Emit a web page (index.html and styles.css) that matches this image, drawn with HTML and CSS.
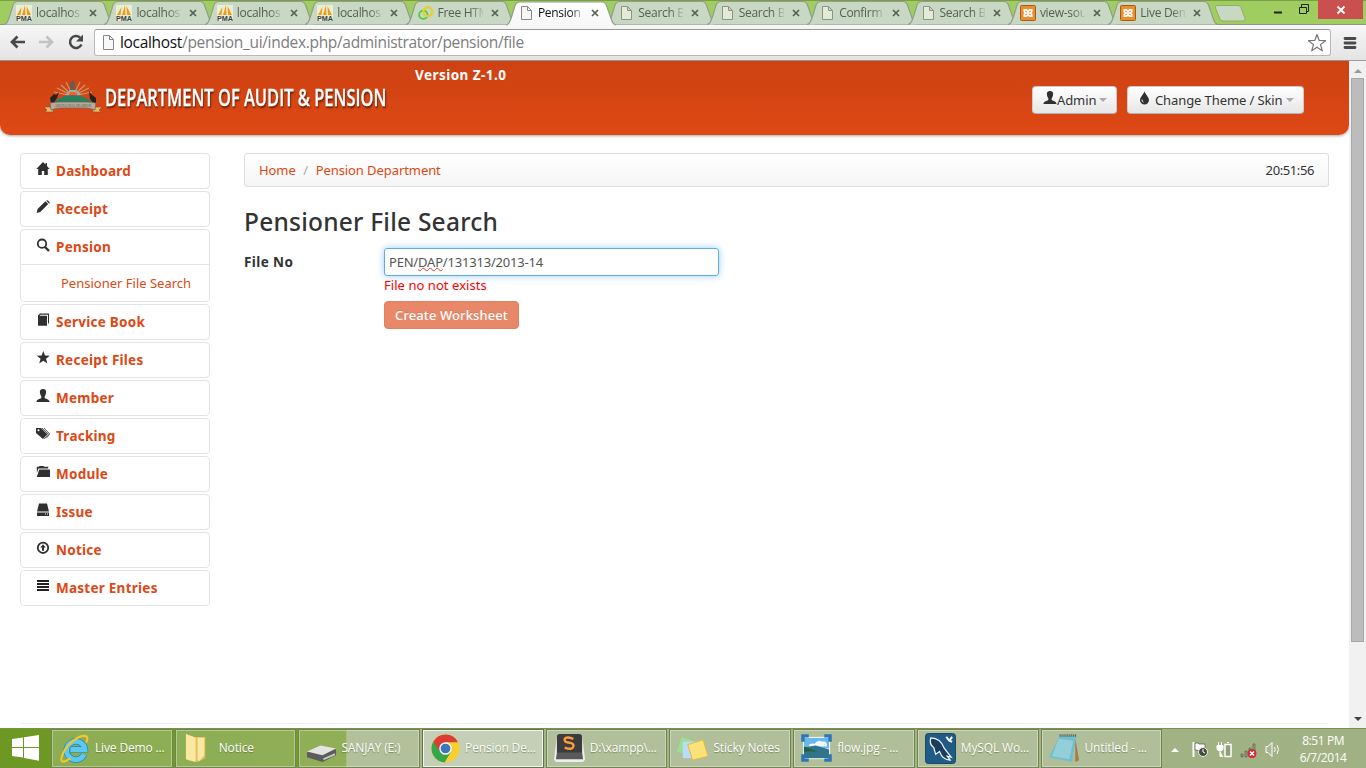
FILE: index.html
```html
<!DOCTYPE html>
<html lang="en">
<head>
<meta charset="utf-8">
<title>Pension Department</title>
<link rel="stylesheet" href="styles.css">
</head>
<body>
<svg class="defs" aria-hidden="true">
  <defs>
    <linearGradient id="gActive" x1="0" y1="0" x2="0" y2="1"><stop offset="0" stop-color="#fff"/><stop offset="1" stop-color="#f7f7f7"/></linearGradient>
    <symbol id="tab" viewBox="0 0 112 25"><path d="M1 24.5C5 24 5 20 7 15L10 5Q11.500 1.500 15 1.500H97Q100 1.500 101.500 5L105 15C107 20 107 24 111 24.500" stroke="#919f88" stroke-width="1.200"/></symbol>
    <symbol id="pma" viewBox="0 0 16 16"><path fill="#e8efd5" d="M0 0h16v16H0z"/><path fill="#f39b18" d="M1 10 5.500 2 4.500 10zM6 10 9 0l.5 10zM11 10 10.500 1l4.500 9z"/><text x="0" y="16" font-size="6.500" font-weight="700" textLength="16" lengthAdjust="spacingAndGlyphs" font-family="Liberation Sans" fill="#394148">PMA</text></symbol>
    <symbol id="page" viewBox="0 0 16 16"><path d="M3.500 1.500h6l4 4v9h-10zM9.500 1.500v4h4" stroke="#8c9388" fill="#e4ebd5"/></symbol>
    <symbol id="pagew" viewBox="0 0 16 16"><path d="M3.500 1.500h6l4 4v9h-10zM9.500 1.500v4h4" stroke="#888" fill="#f6f6f6"/></symbol>
    <symbol id="xampp" viewBox="0 0 16 16"><rect x=".5" y=".5" width="15" height="15" rx="1" fill="#ee8c30" stroke="#a65c12"/><path d="M5 4.800h1.500L8 6.300l1.500-1.500H11M5 11.200h1.500L8 9.700l1.500 1.500H11M5.500 8h5M4.300 4v2.500L5.500 8 4.300 9.500V12M11.700 4v2.500L10.500 8l1.200 1.500V12" fill="none" stroke="#fff" stroke-width="1.700"/></symbol>
    <symbol id="rings" viewBox="0 0 18 16"><circle cx="6" cy="10" r="4.700" fill="none" stroke="#43cf3a" stroke-width="2"/><circle cx="11" cy="6.500" r="5" fill="none" stroke="#e8ce2e" stroke-width="2.600"/></symbol>
    <symbol id="x" viewBox="0 0 8 8"><path d="m1 1 6 6M7 1 1 7" stroke="#566050" stroke-width="1.700"/></symbol>
    <symbol id="user" viewBox="0 0 14 14"><path d="M7 0C4.500 0 3.700 1.500 3.900 3.300 4 5.200 4.700 6.500 5.300 7.200V9C3.500 10.200.6 10.300.5 13h13c-.1-2.700-3-2.800-4.800-4V7.200c.6-.7 1.300-2 1.400-3.900C10.300 1.500 9.500 0 7 0z"/></symbol>
  </defs>
</svg>

<header class="chrome">
  <div class="tabstrip">
    <div class="tab"><svg class="shape"><use href="#tab"/></svg><svg class="fav"><use href="#pma"/></svg><span>localhos</span><svg class="close"><use href="#x"/></svg></div>
    <div class="tab"><svg class="shape"><use href="#tab"/></svg><svg class="fav"><use href="#pma"/></svg><span>localhost</span><svg class="close"><use href="#x"/></svg></div>
    <div class="tab"><svg class="shape"><use href="#tab"/></svg><svg class="fav"><use href="#pma"/></svg><span>localhos</span><svg class="close"><use href="#x"/></svg></div>
    <div class="tab"><svg class="shape"><use href="#tab"/></svg><svg class="fav"><use href="#pma"/></svg><span>localhos</span><svg class="close"><use href="#x"/></svg></div>
    <div class="tab"><svg class="shape"><use href="#tab"/></svg><svg class="fav"><use href="#rings"/></svg><span>Free HTM</span><svg class="close"><use href="#x"/></svg></div>
    <div class="tab active"><svg class="shape"><use href="#tab"/></svg><svg class="fav"><use href="#pagew"/></svg><span>Pension</span><svg class="close"><use href="#x"/></svg></div>
    <div class="tab"><svg class="shape"><use href="#tab"/></svg><svg class="fav"><use href="#page"/></svg><span>Search B</span><svg class="close"><use href="#x"/></svg></div>
    <div class="tab"><svg class="shape"><use href="#tab"/></svg><svg class="fav"><use href="#page"/></svg><span>Search B</span><svg class="close"><use href="#x"/></svg></div>
    <div class="tab"><svg class="shape"><use href="#tab"/></svg><svg class="fav"><use href="#page"/></svg><span>Confirm</span><svg class="close"><use href="#x"/></svg></div>
    <div class="tab"><svg class="shape"><use href="#tab"/></svg><svg class="fav"><use href="#page"/></svg><span>Search B</span><svg class="close"><use href="#x"/></svg></div>
    <div class="tab"><svg class="shape"><use href="#tab"/></svg><svg class="fav"><use href="#xampp"/></svg><span>view-sou</span><svg class="close"><use href="#x"/></svg></div>
    <div class="tab"><svg class="shape"><use href="#tab"/></svg><svg class="fav"><use href="#xampp"/></svg><span>Live Dem</span><svg class="close"><use href="#x"/></svg></div>
    <svg class="newtab" viewBox="0 0 32 17"><path d="M3 .5h21q2 0 3 2l4 11q.5 2.500-1.500 2.500H9q-2 0-3-2L1.500 3Q1 .5 3 .5z" fill="#c9d8c3" stroke="#8faf68"/></svg>
    <div class="winbtns">
      <svg width="50" height="20" viewBox="0 0 50 20"><path d="M8 12.500h8" stroke="#1c2412" stroke-width="2"/><path d="M33.500 7.500h7v6h-7zM35.500 7V4.500h7v7H41" fill="none" stroke="#1c2412"/></svg>
      <div class="winclose"><svg width="10" height="10" viewBox="0 0 10 10"><path d="m1.500 1.500 7 7M8.500 1.500l-7 7" stroke="#fff" stroke-width="1.800"/></svg></div>
    </div>
  </div>
  <div class="toolbar">
    <svg class="nav" width="84" height="20" viewBox="0 0 84 20"><path d="M18 9H5M10.500 3.500 5 9l5.500 5.500" fill="none" stroke="#484848" stroke-width="2.700"/><path d="M32 9h13M39.500 3.500 45 9l-5.500 5.500" fill="none" stroke="#c2c2c2" stroke-width="2.700"/><path d="M74.500 11.500A6 6 0 1 1 73 4.500" fill="none" stroke="#484848" stroke-width="2.500"/><path d="M76 1.500v7h-7z" fill="#484848"/></svg>
    <div class="omnibox">
      <svg width="15" height="17" viewBox="0 0 15 17"><path d="M1.500 1.500h6l4 4v10h-10zM7.500 1.500v4h4" fill="#f8f8f8" stroke="#868686"/></svg>
      <p class="url"><b>localhost</b>/pension_ui/index.php/administrator/pension/file</p>
      <svg class="star" width="20" height="20" viewBox="0 0 20 20"><path d="m10 1.500 2.200 6 6.300.2-5 3.900 1.800 6.200-5.300-3.600-5.300 3.600 1.800-6.200-5-3.900 6.300-.2z" fill="none" stroke="#777" stroke-width="1.200" stroke-linejoin="round"/></svg>
    </div>
    <svg width="14" height="14" viewBox="0 0 14 14"><path d="M2 2.500h10M2 7h10M2 11.500h10" stroke="#4a4a4a" stroke-width="2.800" stroke-linecap="round"/></svg>
  </div>
</header>

<div class="viewport">
  <div class="page">
    <div class="banner">
      <svg class="emblem" width="58" height="34" viewBox="0 0 58 34">
        <path d="M29 16 13 8M29 16 17 5M29 16 22 2M29 16l7-14M29 16 41 5M29 16l16-8M29 16 10 12M29 16l19-4" stroke="#c69a72" stroke-width="1.100"/>
        <path d="M29 0l2 3v8h-5V3z" fill="#715b48"/><path d="m21 15 5-5h6l6 5z" fill="#9db0ad"/><path d="M26 12h6l2 4H24z" fill="#ff5a28"/>
        <path d="M10 22q9-7 19-7t19 7v3H10z" fill="#248060"/>
        <path d="m6 18 4-4 2 1 3-3-2 6-4 6-2-1zM52 18l-5-4-2-3 1 8 4 5 2-1z" fill="#222"/>
        <path d="M0 27h9v5H1l2-2zM58 27h-9v5h8l-2-2z" fill="#f2b65f" stroke="#705b48" stroke-width=".6"/>
        <path d="M6 23q5-1 10-1h26q5 0 10 1l-1 7q-5-2-10-2H17q-5 0-10 2z" fill="#b6aa98" stroke="#6f6257" stroke-width=".7"/>
        <text x="11" y="26.800" textLength="36" lengthAdjust="spacingAndGlyphs" font-family="Liberation Serif" font-size="4.500" fill="#635545">ARUNACHAL PRADESH</text>
      </svg>
      <h1 class="brand"><span>DEPARTMENT OF AUDIT &amp; PENSION</span></h1>
      <strong class="version">Version Z-1.0</strong>
      <div class="actions">
        <button class="btn admin"><svg width="14" height="14"><use href="#user"/></svg><span>Admin</span><i class="caret"></i></button>
        <button class="btn theme"><svg width="11" height="14" viewBox="0 0 11 14"><path d="M5.500 0C5 3 1 6 1 9a4.500 4.500 0 0 0 9 0C10 6 6 3 5.500 0z"/><path d="M3 8.500q-.4 2 1.500 2.700" stroke="#eee" fill="none"/></svg><span>Change Theme / Skin</span><i class="caret"></i></button>
      </div>
    </div>
    <div class="columns">
      <nav class="side">
        <section class="item"><a><svg viewBox="0 0 14 14"><path d="M7 0 .3 7h1.900v6h3.600V9h2.400v4h3.600V7h1.900L11 4V1H9.500v1.600z"/></svg><span>Dashboard</span></a></section>
        <section class="item"><a><svg viewBox="0 0 14 14"><path d="m.6 13 1-4L9.400 1.300l2.800 2.800-7.900 7.900zM10.200.7q1-1 2 0l1 1q.9 1 0 2z"/></svg><span>Receipt</span></a></section>
        <section class="item"><a><svg viewBox="0 0 14 14"><circle cx="6" cy="5.700" r="4.200" fill="none" stroke="#303030" stroke-width="1.800"/><path d="m9 9 4 4" stroke="#303030" stroke-width="2.400"/></svg><span>Pension</span></a><a class="sub"><span>Pensioner File Search</span></a></section>
        <section class="item"><a><svg viewBox="0 0 14 14"><path d="M2 2.500 4 .5h9v10h-1V1.800H4.500L3.500 2.800H11v10H2z"/></svg><span>Service Book</span></a></section>
        <section class="item"><a><svg viewBox="0 0 14 14"><path d="m7.300.1 1.700 4.500 4.800.2-3.800 3 1.400 4.700-4.100-2.700-4.100 2.700 1.400-4.700-3.800-3 4.800-.2z"/></svg><span>Receipt Files</span></a></section>
        <section class="item"><a><svg><use href="#user"/></svg><span>Member</span></a></section>
        <section class="item"><a><svg viewBox="0 0 14 14"><path d="M0 1h5l6.300 6.300L7 12 0 6z"/><circle cx="2.500" cy="3.200" r="1" fill="#fff"/><path d="m6 1 6.300 6.200-4 4.600M8 1l5.700 6-3.500 4.300" fill="none" stroke="#303030" stroke-width=".8"/></svg><span>Tracking</span></a></section>
        <section class="item"><a><svg viewBox="0 0 14 14"><path d="M.8 3V1.800h2L3.500 1h4l.7.800h4V3.500H2.500L.8 8zM3.200 4.500H14V12H.8z"/></svg><span>Module</span></a></section>
        <section class="item"><a><svg viewBox="0 0 14 14"><path d="M3 .5h8l2 8H1zM1 9.500h12V13H1z"/><path d="M9 11h1M11 11h1" stroke="#fff"/></svg><span>Issue</span></a></section>
        <section class="item"><a><svg viewBox="0 0 14 14"><circle cx="7" cy="6.800" r="5.200" fill="none" stroke="#303030" stroke-width="1.800"/><path d="m7 3.200 2.800 3.200H8v3.300H6V6.400H4.200z"/></svg><span>Notice</span></a></section>
        <section class="item"><a><svg viewBox="0 0 14 14"><path d="M1 2h12M1 5h12M1 8h12M1 11h12" stroke="#222" stroke-width="1.900"/></svg><span>Master Entries</span></a></section>
      </nav>
      <main class="content">
        <div class="crumbs"><a class="home">Home</a><i>/</i><a class="dept">Pension Department</a><time>20:51:56</time></div>
        <h2>Pensioner File Search</h2>
        <div class="row">
          <label>File No</label>
          <div class="controls">
            <div class="input"><span>PEN/<u>DAP</u>/131313/2013-14</span></div>
            <p class="error">File no not exists</p>
            <button class="create">Create Worksheet</button>
          </div>
        </div>
      </main>
    </div>
    <hr class="rule">
  </div>
  <div class="scrollbar"><i class="up"></i><div class="thumb"></div><i class="down"></i></div>
</div>

<footer class="taskbar">
  <div class="start"><svg width="27" height="26" viewBox="0 0 27 26"><path d="M0 4 11 2.500V12H0zM12 2.300 27 0v12H12zM0 13h11v9.500L0 21zM12 13h15v12.700L12 23z" fill="#fff"/></svg></div>
  <div class="tasks">
    <div class="task"><svg viewBox="0 0 32 32"><path d="M26 22a9.500 9.500 0 1 1 .8-5H12" fill="none" stroke="#2385b8" stroke-width="6.500"/><path d="M26 22a9.500 9.500 0 1 1 .8-5H12" fill="none" stroke="#5cc8f4" stroke-width="5"/><path d="M12 26C5 31 .5 31 3 24 7 12 20 2 27 3q4 1 1 7" fill="none" stroke="#f8c529" stroke-width="2.200"/></svg><span>Live Demo ...</span></div>
    <div class="task"><svg viewBox="0 0 32 32"><path d="m3 1 9 3h11v22l-8 4-10-2z" fill="#e6bd59"/><path d="m3 1 10 4v25L3 27zM15 5h7v18l-5 6-2-1z" fill="#fae7a2"/></svg><span>Notice</span></div>
    <div class="task"><svg viewBox="0 0 32 32"><path d="m1 20 14-6 16 3v6l-14 7-16-5z" fill="#5c5c5c"/><path d="m1 19 14-6 16 3-14 7z" fill="#e4e4e4"/><path d="m18 26 12-5v2l-12 5z" fill="#ccc"/></svg><span>SANJAY (E:)</span></div>
    <div class="task on"><svg viewBox="0 0 32 32"><circle cx="16" cy="16" r="14.500" fill="#f9ce31"/><path d="M3.500 8.700A14.500 14.500 0 0 0 15 30.500l6.500-11L16 16z" fill="#35a64a"/><path d="M3.500 8.700 10 19l6-9.500h12.900A14.500 14.500 0 0 0 3.500 8.700z" fill="#dc3d32"/><circle cx="16" cy="16" r="6.500" fill="#f7f7f7"/><circle cx="16" cy="16" r="5" fill="#3978bd"/></svg><span>Pension De...</span></div>
    <div class="task"><svg viewBox="0 0 32 32"><path d="M3 3h26l3 24q-1 3-4 3H4q-3 0-4-3z" fill="#eee"/><rect x="3" y="1" width="26" height="22" rx="3" fill="#3c3c3c"/><path d="M3 20h26l1 7H2z" fill="#5a5a5a"/><path d="M20 6q-9-3-9 1 0 3 5 3 5 1 4 4-1 4-9 1" fill="none" stroke="#ff9c3d" stroke-width="2.500"/></svg><span>D:\xampp\...</span></div>
    <div class="task"><svg viewBox="0 0 32 32"><path d="m5 4 14 5-5 15-14-5z" fill="#9bdf95"/><path d="M6 9h16v17H6z" fill="#b9dcfa"/><path d="m11 12 16-5 5 17-16 4z" fill="#fae278" stroke="#dfb947"/></svg><span>Sticky Notes</span></div>
    <div class="task"><svg viewBox="0 0 32 32"><path d="M2 4h28v23H2z" fill="#fff"/><path d="M3 5h26v11H3z" fill="#69b8ec"/><path d="M8 14q0-4 6-3 4-5 8-2 5-1 5 5z" fill="#eef7fa"/><path d="m3 15 12-2 14 4v9H3z" fill="#31758c"/><path d="m3 14 14 5H3z" fill="#24613f"/><path d="M8 3H2v6M24 3h6v6M8 28H2v-6M24 28h6v-6" fill="none" stroke="#2f75b5" stroke-width="3.500"/></svg><span>flow.jpg - ...</span></div>
    <div class="task"><svg viewBox="0 0 32 32"><rect x=".5" y=".5" width="31" height="31" rx="3" fill="#205b86" stroke="#19476a"/><path d="M6 5q10 0 14 11l7 9-4-1 3 4q-8 0-11-9l-4 3-2-7Q4 12 6 5z" fill="#1a3d5d" stroke="#eef5fa" stroke-width="1.300"/><path d="m22 4 3 4 3 1M25 8l3-4" stroke="#fff" stroke-width="2"/></svg><span>MySQL Wo...</span></div>
    <div class="task"><svg viewBox="0 0 32 32"><path d="m27 4 4 24-4 2z" fill="#a47e48"/><path d="M11 3h17l-4 27L0 25z" fill="#71bed0"/><path d="m10 6 15 2-4 19-18-3z" fill="#a8dbe0" opacity=".6"/><path d="M11 2.500h17" stroke="#555" stroke-width="2.500" stroke-dasharray="1 1"/></svg><span>Untitled - ...</span></div>
  </div>
  <div class="tray">
    <svg width="114" height="22" viewBox="0 0 114 22">
      <path d="m5 14 4-4 4 4z" fill="#fff"/>
      <path d="M27.500 4v15" stroke="#fff" stroke-width="2"/><path d="M29 5h3l1 1h6v7h-7l-1-1h-2z" fill="#fff" stroke="#4b5540" stroke-width=".7"/><circle cx="37" cy="14" r="4.500" fill="#444c3c" stroke="#eee"/><path d="M37 11v3l2 1" fill="none" stroke="#fff"/>
      <path d="M52.500 4v3M55.500 4v3" stroke="#fff"/><path d="M51 7.500h6v3q0 2-2 2h-2q-2 0-2-2zM54 13v5.500h3" fill="#fff" stroke="#fff"/><path d="M59 6.500h6v12h-6z" fill="#8f9d79" stroke="#fff" stroke-width="1.500"/><path d="M61 4.500h2" stroke="#fff"/>
      <path d="M75 16h2v3h-2zM79 13h2v6h-2zM83 10h2v9h-2zM87 6h2v13h-2z" fill="#97a386" stroke="#555f49" stroke-width=".7"/><circle cx="86" cy="15.500" r="4.500" fill="#d62b35"/><path d="m84 13.500 4 4M88 13.500l-4 4" stroke="#fff" stroke-width="1.500"/>
      <path d="M100 8.500h2l4-4v14l-4-4h-2z" fill="#a9b698" stroke="#fff"/><path d="M108.500 9q1.500 2.500 0 5M111 7q3 4.500 0 9" fill="none" stroke="#fff"/>
    </svg>
    <div class="clock"><span>8:51 PM</span><span>6/7/2014</span></div>
  </div>
</footer>
</body>
</html>
```
FILE: styles.css
```css
* { box-sizing: border-box; }
body { margin: 0; width: 1366px; height: 768px; overflow: hidden; display: flex; flex-direction: column; background: #fff; color: #333; font: 13px/20px "Noto Sans", sans-serif; }
.defs { position: absolute; width: 0; height: 0; }
svg { flex: none; display: block; }
p, h1, h2 { margin: 0; }
button { font: inherit; color: inherit; }

.chrome { height: 61px; flex: none; background: #a0cd60; border-bottom: 1px solid #9d9d9d; }
.tabstrip { height: 25px; display: flex; padding-left: 3px; border-top: 1px solid #7d9e47; border-bottom: 1px solid #8c9885; }
.tab { position: relative; z-index: 1; width: 100.400px; flex: none; height: 24px; padding-left: 13px; display: flex; align-items: center; gap: 4px; color: #56604f; font: 12px/20px "Open Sans", sans-serif; }
.tab .shape { position: absolute; left: 0; top: -1px; width: 112px; height: 25px; fill: #c9d7c5; z-index: -1; }
.tab .fav { width: 16px; height: 16px; }
.tab span { width: 45px; white-space: nowrap; letter-spacing: -.3px; -webkit-mask-image: linear-gradient(90deg, #000 72%, rgba(0,0,0,.15)); mask-image: linear-gradient(90deg, #000 72%, rgba(0,0,0,.15)); }
.tab .close { width: 8px; height: 8px; margin-left: 4px; }
.tab.active { z-index: 2; color: #111; }
.tab.active .shape { fill: url(#gActive); height: 26px; }
.newtab { width: 32px; height: 17px; margin: 4px 0 0 6px; }
.winbtns { margin-left: auto; display: flex; margin-top: -1px; }
.winbtns > svg { margin-right: 2px; }
.winclose { width: 45px; height: 19px; margin-right: 3px; background: #c9504f; display: grid; place-items: center; }
.toolbar { height: 35px; display: flex; align-items: center; background: linear-gradient(#f7f7f7, #e4e4e4); padding: 0 9px 0 7px; }
.nav { margin-right: 3px; }
.omnibox { width: 1237px; height: 27px; margin-right: 12px; display: flex; align-items: center; padding: 0 3px 0 7px; border: 1px solid #b9b9b9; border-top-color: #999; border-radius: 3px; background: #fff; }
.url { margin: -1px auto 0 3px; font: 15.500px/22px "Open Sans", sans-serif; letter-spacing: -.32px; color: #7d7d7d; white-space: nowrap; }
.url b { font-weight: 400; color: #111; }

.viewport { height: 667px; flex: none; display: flex; }
.page { width: 1349px; display: flex; flex-direction: column; }
.banner { height: 74px; flex: none; display: flex; padding: 0 45px 0 44px; border-radius: 0 0 10px 10px; background: linear-gradient(#cd4213, #de4814); box-shadow: 0 1px 3px rgba(0,0,0,.35); }
.emblem { margin: 19px 3px 0 0; }
.brand { width: 282px; height: 32px; margin-top: 21px; font: 600 22.500px/32px "Open Sans", sans-serif; color: #fff; white-space: nowrap; text-shadow: 1px 2px 2px rgba(40,15,0,.7); }
.brand span { display: inline-block; transform: scaleX(.732); transform-origin: left; -webkit-text-stroke: .3px #fff; }
.version { margin: 4px 0 0 28px; font-size: 13.500px; letter-spacing: .45px; color: #fff; }
.actions { display: flex; gap: 10px; margin: 25px 0 0 auto; }
.btn { height: 28px; display: flex; align-items: center; padding: 0 10px; white-space: nowrap; border: 1px solid #ccc; border-bottom-color: #b3b3b3; border-radius: 4px; background: linear-gradient(#fff, #e6e6e6); }
.btn svg { margin-top: -4px; fill: #303030; }
.btn span { letter-spacing: -.1px; }
.admin { width: 85px; }
.admin .caret { margin-left: 3px; }
.theme { width: 177px; padding-left: 11px; }
.theme span { margin-left: 5px; }
.caret { margin-left: 3px; border: 4px solid transparent; border-top-color: #aaa; border-bottom: 0; }
.columns { display: flex; gap: 34px; padding: 18px 20px 0; height: 588px; }
.side { width: 190px; display: flex; flex-direction: column; gap: 2px; }
.item { border: 1px solid #e3e3e3; border-radius: 4px; }
.item a { height: 34px; display: flex; align-items: center; gap: 6px; padding-left: 15px; color: #dd4814; font-size: 13.500px; font-weight: 700; letter-spacing: .25px; }
.item a svg { width: 14px; height: 14px; margin-top: -4px; fill: #303030; }
.item a.sub { height: 39px; margin-bottom: 0; border-top: 1px solid #e3e3e3; padding-left: 40px; font-size: 13px; font-weight: 400; letter-spacing: 0; }
.item a.sub { height: 37px; }
.content { width: 1085px; }
.crumbs { height: 34px; display: flex; align-items: center; padding: 0 14px; border: 1px solid #ddd; border-radius: 3px; background: linear-gradient(#fff, #f5f5f5); }
.crumbs a { color: #dd4814; letter-spacing: -.08px; }
.crumbs i { width: 20px; text-align: center; font-style: normal; color: #aaa; }
.crumbs time { margin-left: auto; letter-spacing: -.4px; }
h2 { margin: 15px 0 6px; font-size: 24.500px; line-height: 40px; font-weight: 500; letter-spacing: .22px; }
.row { display: flex; }
label { width: 140px; padding-top: 4px; font-size: 13.500px; font-weight: 700; letter-spacing: .4px; }
.input { width: 335px; height: 28px; padding: 3px 4px; border: 1px solid #5cade8; border-radius: 3px; box-shadow: 0 0 7px rgba(82,168,236,.6); color: #555; letter-spacing: -.2px; }
.input u { text-decoration: underline wavy #e33 1px; text-underline-offset: 0; text-decoration-skip-ink: none; }
.error { margin: -1px 0 6px; color: #f00; letter-spacing: .05px; }
.create { width: 135px; height: 28px; padding: 0; border: 1px solid #de8062; border-radius: 4px; background: #e98868; color: #fff; font-weight: 500; letter-spacing: .1px; text-shadow: 0 -1px rgba(0,0,0,.1); }
.rule { width: 1309px; margin: 0 20px; border: 0; border-top: 1px solid #f0f0f0; }
.scrollbar { width: 17px; background: #f1f1f1; display: flex; flex-direction: column; align-items: center; }
.up { height: 4px; margin: 8px 0 5px; border: 4px solid transparent; border-bottom-color: #999; border-top: 0; }
.thumb { width: 13px; height: 564px; flex: none; background: #bcbcbc; border: 1px solid #a8a8a8; }
.down { margin: auto 0 7px; border: 4px solid transparent; border-top-color: #444; border-bottom: 0; }

.taskbar { height: 40px; flex: none; display: flex; border-top: 1px solid #78914d; background: linear-gradient(90deg, #6c9823 0, #719c28 346px, #a4b786 346px, #a0b283 100%); color: #fff; font: 12px/20px "Open Sans", sans-serif; }
.start { width: 51px; padding: 6px 0 0 12px; }
.tasks { display: flex; gap: 2px; }
.task { width: 121.700px; height: 39px; display: flex; align-items: center; gap: 5px; padding-left: 7px; border: 1px solid #71844d; box-shadow: inset 0 0 0 1px rgba(255,255,255,.35); background: rgba(190,202,174,.52); white-space: nowrap; }
.task:nth-child(-n+3) { background: rgba(174,193,132,.5); }
.task:nth-child(3) { gap: 4px; background: linear-gradient(90deg, rgba(174,193,132,.5) 40%, rgba(190,202,174,.52) 40%); }
.task svg { width: 31px; height: 31px; margin-top: -1px; }
.task span { margin-top: -2px; letter-spacing: -.15px; text-shadow: 0 1px 1px rgba(70,90,40,.5); }
.task.on { gap: 4px; background: #c5ceb6; border-color: #64734c; box-shadow: inset 0 0 0 1px #f1f4ec; }
.tray { flex: 1; display: flex; padding-left: 4px; }
.tray > svg { margin-top: 9px; }
.clock { width: 76px; margin-left: 5px; padding-top: 3px; display: flex; flex-direction: column; align-items: center; line-height: 17px; letter-spacing: -.4px; }
.clock span { white-space: nowrap; }
```
